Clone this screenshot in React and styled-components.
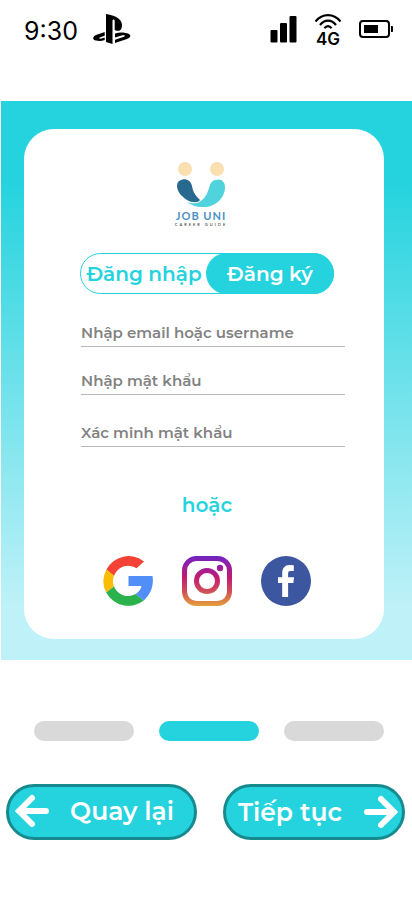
import React, { useState } from "react";
import styled, { createGlobalStyle } from "styled-components";

const cyan = "#24d3de";

const GlobalStyle = createGlobalStyle`
  *, *::before, *::after { box-sizing: border-box; }
  body {
    margin: 0;
    background: #fff;
    font-family: Montserrat, Inter, "Noto Sans", sans-serif;
  }
  button, input { font: inherit; }
`;

const StatusBar = styled.header`
  display: flex;
  align-items: flex-start;
  justify-content: space-between;
  height: 101px;
  padding: 11px 18px 0 24px;
  color: #000;
`;

const StatusGroup = styled.div`
  display: flex;
  align-items: center;
  gap: ${({ $gap }) => $gap}px;
  height: 36px;
`;

const Clock = styled.time`
  padding-top: 4px;
  font-family: Inter, sans-serif;
  font-size: 25px;
  line-height: 36px;
`;

const Network = styled.div`
  display: flex;
  flex-direction: column;
  align-items: center;
  padding-top: 2px;
  font-family: Inter, sans-serif;
  font-size: 17px;
  font-weight: 600;
  line-height: 18px;
  svg { display: block; }
`;

const Panel = styled.main`
  margin-left: 1px;
  padding: 28px 28px 21px 23px;
  background: linear-gradient(180deg, ${cyan} 14%, #bef1f8 90%);
`;

const Card = styled.form`
  display: flex;
  flex-direction: column;
  align-items: center;
  padding: 33px 0 33px 6px;
  border-radius: 30px;
  background: #fff;
`;

const LogoMark = styled.svg`
  display: block;
  margin-right: 12px;
`;

const Tabs = styled.div`
  display: flex;
  width: 254px;
  height: 41px;
  margin-top: 26px;
  border: 1px solid ${cyan};
  border-radius: 21px;
`;

const Tab = styled.button`
  flex: ${({ $active }) => ($active ? "0 0 128px" : "1")};
  margin: -1px;
  padding: 0;
  border: 0;
  border-radius: 21px;
  background: ${({ $active }) => ($active ? cyan : "transparent")};
  color: ${({ $active }) => ($active ? "#fff" : cyan)};
  font-size: 20px;
  font-weight: 600;
  white-space: nowrap;
  cursor: pointer;
`;

const Fields = styled.div`
  display: grid;
  grid-template-rows: 28px 28px 32px;
  align-items: end;
  gap: 20px;
  align-self: stretch;
  margin: 25px 39px 0 51px;
`;

const Field = styled.input`
  width: 100%;
  height: 28px;
  padding: 0;
  border: 0;
  border-bottom: 1px solid #b9b9b9;
  border-radius: 0;
  outline: 0;
  background: transparent;
  color: #333;
  font-size: 15px;
  font-weight: 600;
  &::placeholder { color: #828282; opacity: 1; }
`;

const Divider = styled.p`
  margin: 44px 0 0;
  color: ${cyan};
  font-size: 20px;
  font-weight: 600;
  line-height: 28px;
`;

const Socials = styled.div`
  display: flex;
  gap: 29px;
  margin-top: 37px;
`;

const SocialButton = styled.button`
  width: 50px;
  height: 50px;
  padding: 0;
  border: 0;
  background: transparent;
  cursor: pointer;
  svg { display: block; }
`;

const Steps = styled.ol`
  display: flex;
  justify-content: space-between;
  margin: 61px 28px 0 34px;
  padding: 0;
  list-style: none;
`;

const Step = styled.li`
  width: 100px;
  height: 20px;
  border-radius: 10px;
  background: ${({ $active }) => ($active ? cyan : "#d9d9d9")};
`;

const Actions = styled.nav`
  display: grid;
  grid-template-columns: 191fr 182fr;
  gap: 26px;
  margin: 43px 7px 0 6px;
`;

const ActionButton = styled.button`
  display: flex;
  align-items: center;
  justify-content: space-between;
  height: 56px;
  padding: ${({ $back }) => ($back ? "0 20px 2px 6px" : "0 4px 0 12px")};
  border: 3px solid #178a90;
  border-radius: 28px;
  background: ${cyan};
  color: #fff;
  font-size: 25px;
  font-weight: 600;
  white-space: nowrap;
  cursor: pointer;
`;

const Logo = () => (
  <LogoMark width="56" height="65" viewBox="0 0 56 65" role="img" aria-label="Job Uni Career Guide">
    <circle cx="12" cy="7" r="7" fill="#fcdfb0" />
    <circle cx="44" cy="7" r="7" fill="#fcdfb0" />
    <path d="M8 18C13 16 18 19 19 24C20 31 24 35 27 38C25 41 19 41 14 38C8 34 4 29 4 24C4 21 5 19 8 18Z" fill="#286990" />
    <path d="M43 18C48 16 52 20 52 25C52 37 41 46 29 45C23 45 18 43 14 40C20 42 25 42 29 38C34 34 35 29 37 23C38 20 40 18 43 18Z" fill="#50d3dc" />
    <text x="28" y="58" textAnchor="middle" fontFamily="Lato, sans-serif" fontSize="11" fontWeight="700" letterSpacing="1" fill="#4c91c4">JOB UNI</text>
    <text x="28" y="64" textAnchor="middle" fontFamily="Lato, sans-serif" fontSize="4" fontWeight="400" letterSpacing="2" fill="#222">CAREER GUIDE</text>
  </LogoMark>
);

const PlayStationIcon = () => (
  <svg width="38" height="30" viewBox="0 0 38 30" aria-hidden="true">
    <path d="M13 0C20 1 29 4 29 11C29 16.5 26 18 21.7 16V7C21.7 5 19.5 5 19.5 7V30L13 28Z" />
    <path d="M11.7 18L3 21C-1 23 -.5 26 3 26.5C6 27.3 9 27 11.7 26V23.5L8.5 24.5C6 25 5 24 8 23L11.7 21.7Z" />
    <path d="M22 19.5C27 18 32 18.5 36 20C38.5 21.5 37.5 23.5 34 25L22 29V25.7L31 22.7C33 21.8 31.5 21 28.5 21.5L22 23.5Z" />
  </svg>
);

const SignalIcon = () => (
  <svg width="27" height="27" viewBox="0 0 27 27" aria-hidden="true">
    <rect x="0.5" y="14" width="7" height="12.5" rx="1" />
    <rect x="10" y="7" width="7" height="19.5" rx="1" />
    <rect x="19.5" y="0" width="7" height="26.5" rx="1" />
  </svg>
);

const WifiIcon = () => (
  <svg width="28" height="17" viewBox="0 0 28 17" fill="none" stroke="#000" strokeWidth="2.2" aria-hidden="true">
    <path d="M1.5 8.5C8.5 0 19.5 0 26.5 8.5M6 12C10.5 6.2 17.5 6.2 22 12M10.5 15.3C12.3 12.3 15.7 12.3 17.5 15.3" />
  </svg>
);

const BatteryIcon = () => (
  <svg width="35" height="18" viewBox="0 0 35 18" aria-hidden="true">
    <rect x="1" y="1" width="29" height="16" rx="3" fill="none" stroke="#000" strokeWidth="2" />
    <rect x="5" y="5" width="14" height="8" />
    <path d="M32 6h1.2q.8 0 .8.8v4.4q0 .8-.8.8H32z" />
  </svg>
);

const GoogleIcon = () => (
  <svg width="50" height="50" viewBox="0 0 50 50" aria-hidden="true">
    <path d="M3.4 13.4A25 25 0 0 1 41 5.5L33.5 12.3A15 15 0 0 0 11 20Z" fill="#f44336" />
    <path d="M3.4 13.4A25 25 0 0 0 3.2 36.6L11 30.5A15 15 0 0 1 11 19.5Z" fill="#fbbc05" />
    <path d="M3.2 36.6A25 25 0 0 0 40.8 44.4L32.5 38A15 15 0 0 1 11 30.5Z" fill="#2bb24c" />
    <path d="M25.5 20H49.5C51 29 48 38 40.8 44.4L32.5 38C35.8 36 37.8 33.5 38.5 30H25.5Z" fill="#518ef8" />
  </svg>
);

const InstagramIcon = () => (
  <svg width="50" height="50" viewBox="0 0 50 50" fill="none" aria-hidden="true">
    <defs>
      <linearGradient id="instagram" x1="0" y1="0" x2="0" y2="50" gradientUnits="userSpaceOnUse">
        <stop stopColor="#7024c4" />
        <stop offset=".42" stopColor="#c21975" />
        <stop offset=".7" stopColor="#cf4d56" />
        <stop offset="1" stopColor="#e4a03b" />
      </linearGradient>
    </defs>
    <rect x="2.5" y="2.5" width="45" height="45" rx="12" stroke="url(#instagram)" strokeWidth="5" />
    <circle cx="25" cy="25" r="10.5" stroke="url(#instagram)" strokeWidth="5" />
    <circle cx="38" cy="12" r="3.2" fill="url(#instagram)" />
  </svg>
);

const FacebookIcon = () => (
  <svg width="50" height="50" viewBox="0 0 50 50" aria-hidden="true">
    <circle cx="25" cy="25" r="25" fill="#3c569f" />
    <path d="M32.8 9.3V15.1H29.2C27.7 15.1 27.1 16 27.1 17.5V21.3H33L32.4 27H27.1V41H21.2V27H17V21.3H21.2V17C21.2 12 24 9 28.5 9Q31 9 32.8 9.3Z" fill="#fff" />
  </svg>
);

const ArrowIcon = ({ back }) => (
  <svg width="34" height="34" viewBox="0 0 34 34" fill="none" stroke="#fff" strokeWidth="6" strokeLinecap="round" aria-hidden="true">
    <path d={back ? "M31 17H6" : "M3 17H28"} />
    <path d={back ? "M17 4L4 17L17 30" : "M17 4L30 17L17 30"} />
  </svg>
);

const socials = [
  ["Google", GoogleIcon],
  ["Instagram", InstagramIcon],
  ["Facebook", FacebookIcon],
];

export default function App() {
  const [tab, setTab] = useState("register");
  return (
    <>
      <GlobalStyle />
      <StatusBar>
        <StatusGroup $gap={15}>
          <Clock>9:30</Clock>
          <PlayStationIcon />
        </StatusGroup>
        <StatusGroup $gap={17}>
          <SignalIcon />
          <Network>
            <WifiIcon />
            4G
          </Network>
          <BatteryIcon />
        </StatusGroup>
      </StatusBar>
      <Panel>
        <Card onSubmit={(event) => event.preventDefault()}>
          <Logo />
          <Tabs role="tablist">
            <Tab type="button" role="tab" aria-selected={tab === "login"} $active={tab === "login"} onClick={() => setTab("login")}>
              Đăng nhập
            </Tab>
            <Tab type="button" role="tab" aria-selected={tab === "register"} $active={tab === "register"} onClick={() => setTab("register")}>
              Đăng ký
            </Tab>
          </Tabs>
          <Fields>
            <Field type="text" aria-label="Nhập email hoặc username" placeholder="Nhập email hoặc username" />
            <Field type="password" aria-label="Nhập mật khẩu" placeholder="Nhập mật khẩu" />
            <Field type="password" aria-label="Xác minh mật khẩu" placeholder="Xác minh mật khẩu" />
          </Fields>
          <Divider>hoặc</Divider>
          <Socials>
            {socials.map(([name, Icon]) => (
              <SocialButton key={name} type="button" aria-label={name}>
                <Icon />
              </SocialButton>
            ))}
          </Socials>
        </Card>
      </Panel>
      <Steps>
        <Step />
        <Step $active aria-current="step" />
        <Step />
      </Steps>
      <Actions>
        <ActionButton type="button" $back>
          <ArrowIcon back />
          Quay lại
        </ActionButton>
        <ActionButton type="button">
          Tiếp tục
          <ArrowIcon />
        </ActionButton>
      </Actions>
    </>
  );
}
